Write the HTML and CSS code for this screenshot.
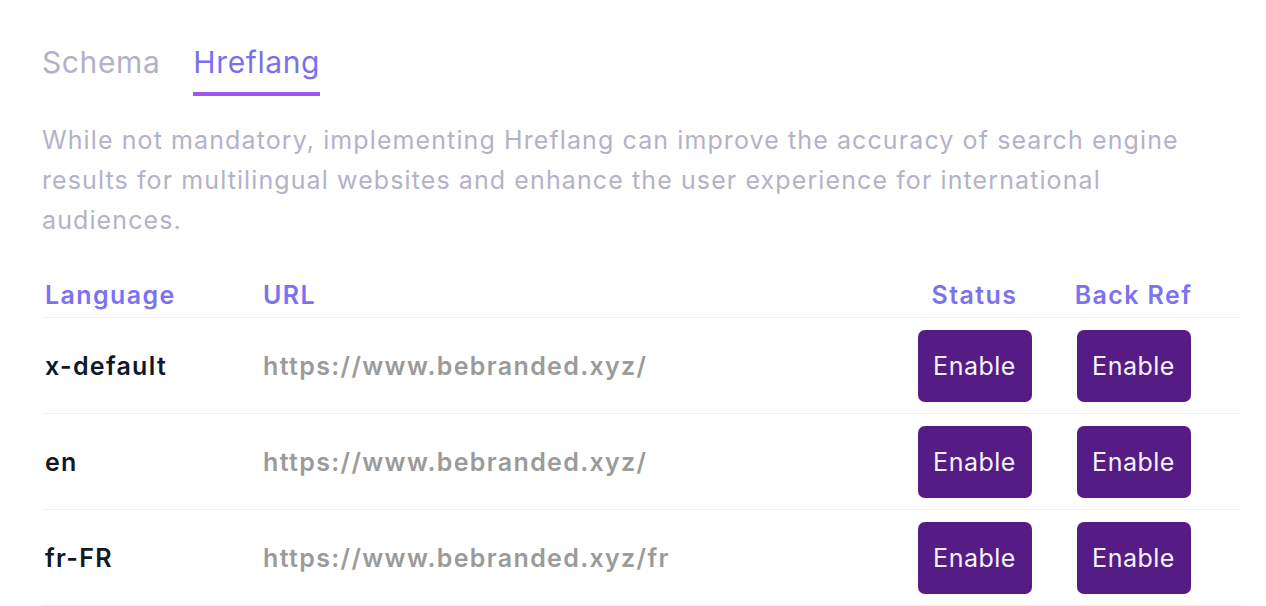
FILE: index.html
```html
<!DOCTYPE html>
<html lang="en">
<head>
    <meta charset="UTF-8">
    <meta name="viewport" content="width=device-width, initial-scale=1.0">
    <title>Hreflang</title>
    <link rel="stylesheet" href="styles.css">
</head>
<body>
    <div class="panel">
        <!-- Tabs -->
        <div class="tabs">
            <span class="tab">Schema</span>
            <span class="tab active">Hreflang</span>
        </div>

        <p class="intro">While not mandatory, implementing Hreflang can improve the accuracy of search engine results for multilingual websites and enhance the user experience for international audiences.</p>

        <!-- Tabla hreflang -->
        <div class="table">
            <div class="row head">
                <div class="cell">Language</div>
                <div class="cell">URL</div>
                <div class="cell center">Status</div>
                <div class="cell center">Back Ref</div>
            </div>
            <div class="row">
                <div class="cell lang">x-default</div>
                <div class="cell url">https://www.bebranded.xyz/</div>
                <div class="cell center"><button class="button">Enable</button></div>
                <div class="cell center"><button class="button">Enable</button></div>
            </div>
            <div class="row">
                <div class="cell lang">en</div>
                <div class="cell url">https://www.bebranded.xyz/</div>
                <div class="cell center"><button class="button">Enable</button></div>
                <div class="cell center"><button class="button">Enable</button></div>
            </div>
            <div class="row">
                <div class="cell lang">fr-FR</div>
                <div class="cell url">https://www.bebranded.xyz/fr</div>
                <div class="cell center"><button class="button">Enable</button></div>
                <div class="cell center"><button class="button">Enable</button></div>
            </div>
        </div>
    </div>
</body>
</html>
```

FILE: styles.css
```css
body {
    font-family: Inter, "Noto Sans", sans-serif;
    background-color: #fff;
    color: #111827;
    margin: 0;
}
.panel {
    padding: 44px 25px 0 42px;
}
.tabs {
    display: flex;
    gap: 33px;
}
.tab {
    font-size: 30px;
    letter-spacing: 0.6px;
    color: #b3b1c7;
    padding-bottom: 12px;
    border-bottom: 4px solid transparent;
}
.tab.active {
    color: #7b6ff0;
    border-bottom-color: #a356ef;
}
.intro {
    font-size: 25px;
    line-height: 40px;
    letter-spacing: 1.1px;
    color: #b4b2c8;
    margin: 24px 0 0;
    max-width: 1160px;
}
.table {
    margin-top: 32px;
}
.row {
    display: grid;
    grid-template-columns: 218px 1fr 159px 159px 28px;
    align-items: center;
    height: 96px;
    box-sizing: border-box;
    border-bottom: 1px solid #f1f1f3;
}
.row.head {
    height: 46px;
}
.row.head .cell {
    font-size: 25px;
    font-weight: 600;
    letter-spacing: 1.4px;
    color: #7c72f1;
}
.cell {
    padding-left: 3px;
}
.cell.center {
    text-align: center;
    padding-left: 0;
}
.lang {
    font-size: 25px;
    font-weight: 600;
    letter-spacing: 1.3px;
    color: #111827;
}
.url {
    font-size: 25px;
    font-weight: 600;
    letter-spacing: 1.35px;
    color: #9b9b9b;
}
.button {
    width: 114px;
    height: 72px;
    background-color: #561c85;
    color: #f7f2fb;
    border: none;
    border-radius: 7px;
    font-family: inherit;
    font-size: 25px;
    letter-spacing: 0.5px;
    cursor: pointer;
}
```
